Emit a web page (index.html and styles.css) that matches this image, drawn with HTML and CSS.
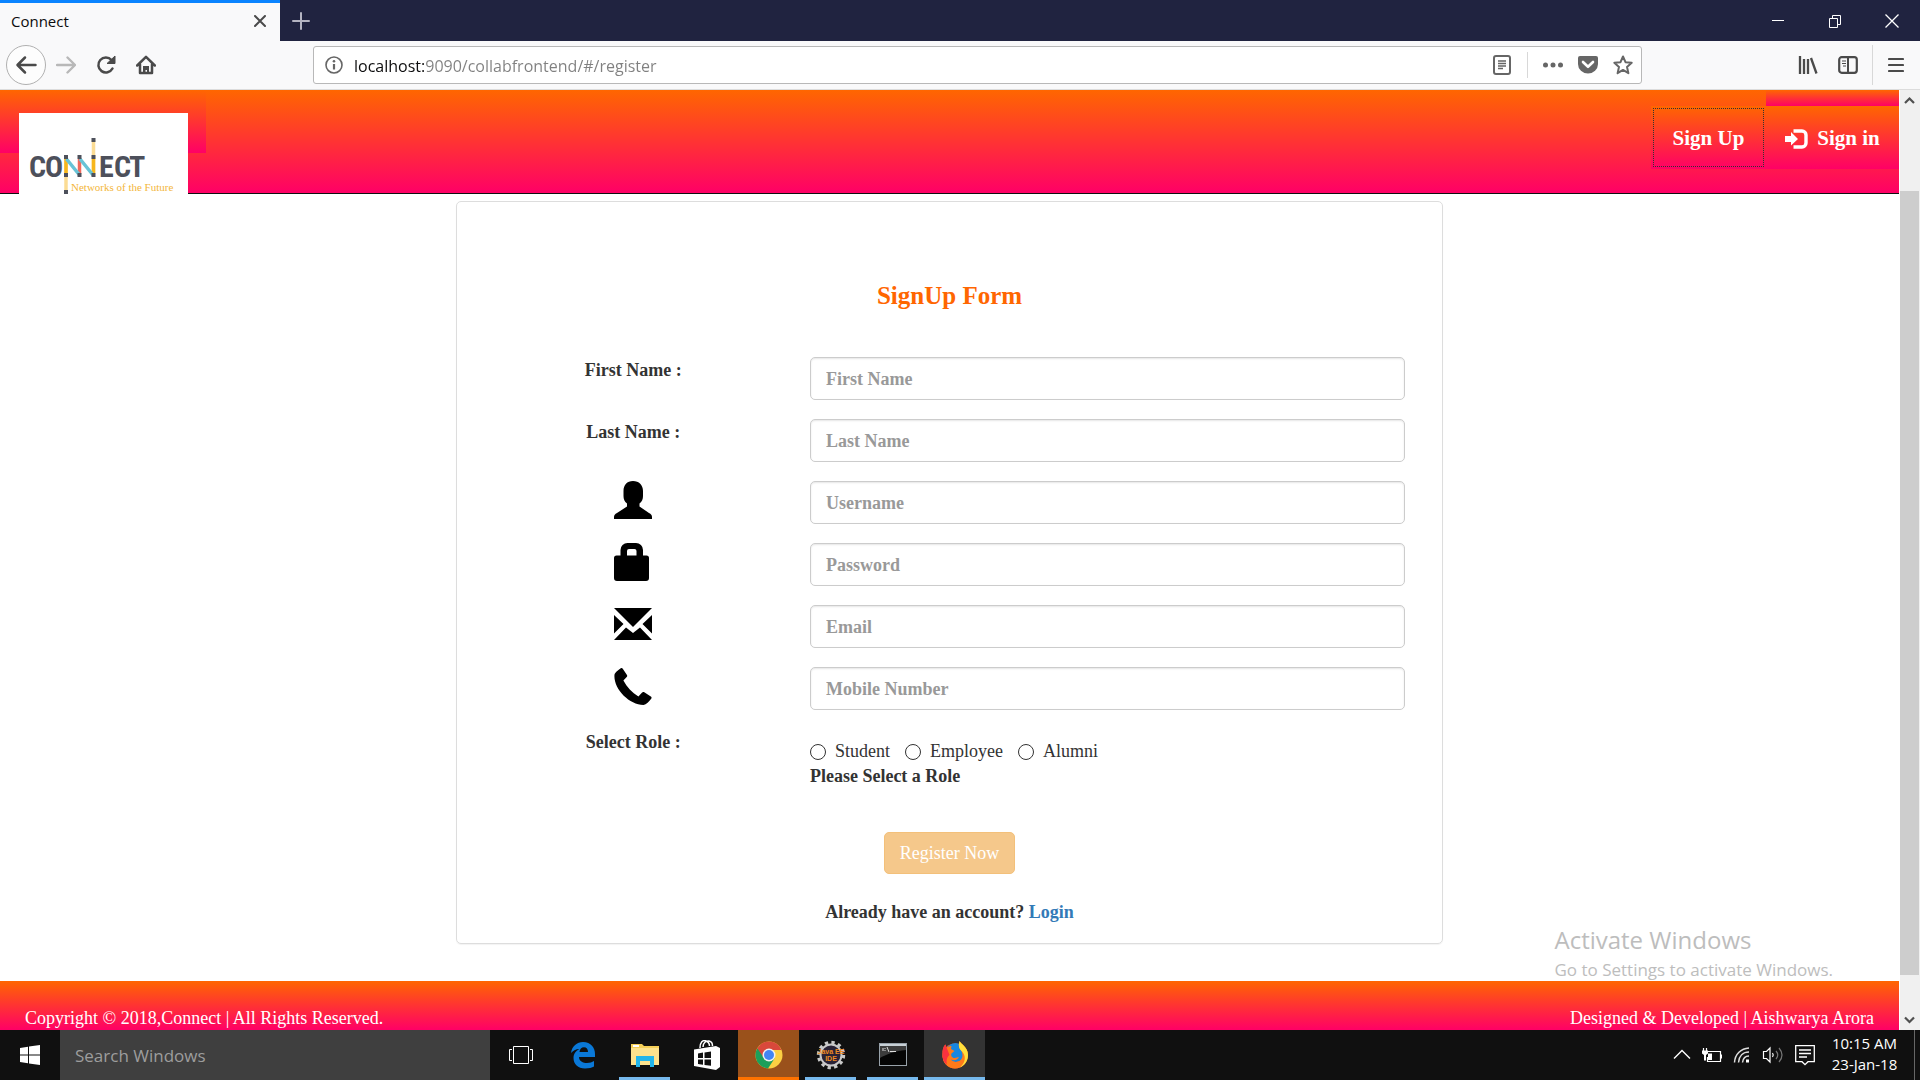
FILE: index.html
```html
<!DOCTYPE html>
<html lang="en">
<head>
<meta charset="utf-8">
<title>Connect</title>
<link rel="stylesheet" href="styles.css">
</head>
<body>
<div class="titlebar">
  <div class="tab">
    <span class="tab-title">Connect</span>
    <button class="tab-close" type="button" aria-label="Close tab"><svg width="12" height="12" viewBox="0 0 12 12"><path d="M1 1l10 10M11 1L1 11" fill="none" stroke="#4a4a4a" stroke-width="2" stroke-linecap="round"/></svg></button>
  </div>
  <button class="tab-new" type="button" aria-label="New tab"><svg width="18" height="18" viewBox="0 0 18 18"><path d="M9 1v16M1 9h16" fill="none" stroke="#b4b4c2" stroke-width="2" stroke-linecap="round"/></svg></button>
  <div class="window-controls">
    <button type="button" aria-label="Minimize"><svg width="14" height="14" viewBox="0 0 14 14"><path d="M1 6.500h12" stroke="#fff"/></svg></button>
    <button type="button" aria-label="Restore"><svg width="14" height="14" viewBox="0 0 14 14"><path d="M1.500 4.500h8v9h-8zM4.500 4.500v-3h8v9h-3" fill="none" stroke="#fff"/></svg></button>
    <button type="button" aria-label="Close"><svg width="14" height="14" viewBox="0 0 14 14"><path d="M.5.500l13 13M13.500.500l-13 13" stroke="#fff" stroke-width="1.300"/></svg></button>
  </div>
</div>

<div class="toolbar">
  <button class="tool tool-back" type="button" aria-label="Back"><svg width="40" height="40" viewBox="0 0 40 40"><circle cx="20" cy="20" r="19.500" fill="#fdfdfd" stroke="#b0b0b0"/><path d="M29.500 20H12M19 12.500L11.500 20l7.500 7.500" fill="none" stroke="#4a4a4a" stroke-width="2.500" stroke-linecap="round" stroke-linejoin="round"/></svg></button>
  <button class="tool" type="button" aria-label="Forward"><svg width="20" height="20" viewBox="0 0 20 20"><path d="M1 10h17M11.500 2.500L19 10l-7.500 7.500" fill="none" stroke="#b8b8b8" stroke-width="2.400" stroke-linecap="round" stroke-linejoin="round"/></svg></button>
  <button class="tool" type="button" aria-label="Reload"><svg width="20" height="20" viewBox="0 0 20 20"><path d="M16.500 13.500A7.500 7.500 0 1 1 15.500 5" fill="none" stroke="#4a4a4a" stroke-width="2.500" stroke-linecap="round"/><path d="M19 1v7.500h-8z" fill="#4a4a4a" stroke="#4a4a4a" stroke-linejoin="round"/></svg></button>
  <button class="tool" type="button" aria-label="Home"><svg width="20" height="20" viewBox="0 0 20 20"><path d="M1.200 10.500L10 1.800l8.800 8.700M4 9.500V18h12V9.500" fill="none" stroke="#4a4a4a" stroke-width="2.500" stroke-linecap="round" stroke-linejoin="round"/><path d="M7 19v-8h6v8h-2v-4H9.500v4z" fill="#4a4a4a"/></svg></button>
  <div class="urlbar">
    <svg class="info" width="18" height="18" viewBox="0 0 18 18"><circle cx="9" cy="9" r="8" fill="none" stroke="#666" stroke-width="1.600"/><circle cx="9" cy="5.200" r="1.300" fill="#666"/><path d="M9 8v5.500" stroke="#666" stroke-width="2.200"/></svg>
    <input class="url" type="text" aria-label="Address" value="localhost:9090/collabfrontend/#/register">
    <button type="button" aria-label="Reader view"><svg width="20" height="20" viewBox="0 0 20 20"><rect x="2" y="1" width="16" height="18" rx="2" fill="none" stroke="#666" stroke-width="2"/><path d="M6 6h8M6 8.500h8M6 11h8M6 13.500h5" stroke="#666" stroke-width="1.400"/></svg></button>
    <span class="url-divider"></span>
    <button type="button" aria-label="Page actions"><svg width="20" height="20" viewBox="0 0 20 20"><g fill="#666"><circle cx="2.500" cy="10" r="2.500"/><circle cx="10" cy="10" r="2.500"/><circle cx="17.500" cy="10" r="2.500"/></g></svg></button>
    <button type="button" aria-label="Save to Pocket"><svg width="20" height="20" viewBox="0 0 20 20"><path d="M2 1h16a2 2 0 0 1 2 2v6a10 9.500 0 0 1-20 0V3a2 2 0 0 1 2-2z" fill="#666"/><path d="M5 7l5 4.800L15 7" fill="none" stroke="#fff" stroke-width="2.600" stroke-linecap="round" stroke-linejoin="round"/></svg></button>
    <button type="button" aria-label="Bookmark"><svg width="20" height="20" viewBox="0 0 20 20"><path d="M10 1.500l2.500 5.700 6.200.6-4.700 4.100 1.400 6.300-5.400-3.300-5.400 3.300L6 11.900 1.300 7.800l6.200-.6z" fill="none" stroke="#666" stroke-width="2" stroke-linejoin="round"/></svg></button>
  </div>
  <button class="tool" type="button" aria-label="Library"><svg width="20" height="20" viewBox="0 0 20 20"><path d="M2 1v18M6 4v15M10 4v15M13 3l5.500 15.500" fill="none" stroke="#4a4a4a" stroke-width="2.300"/></svg></button>
  <button class="tool" type="button" aria-label="Sidebars"><svg width="20" height="20" viewBox="0 0 20 20"><rect x="1.200" y="2.200" width="17.600" height="15.600" rx="2.500" fill="none" stroke="#4a4a4a" stroke-width="2.200"/><path d="M10 2v16" stroke="#4a4a4a" stroke-width="2"/><path d="M4 6h4M4 8.500h4M5 11h3" stroke="#4a4a4a" stroke-width="1.200"/></svg></button>
  <span class="tool-divider"></span>
  <button class="tool" type="button" aria-label="Menu"><svg width="16" height="16" viewBox="0 0 16 16"><path d="M1 2h14M1 8h14M1 14h14" stroke="#4a4a4a" stroke-width="2.200" stroke-linecap="round"/></svg></button>
</div>

<div class="viewport">
  <div class="page">
    <header class="site-header">
      <a class="brand" href="#/" aria-label="Connect, Networks of the Future">
        <svg class="logo" width="169" height="81" viewBox="0 0 169 81">
          <rect width="169" height="81" fill="#fff"/>
          <g class="logo-name"><text x="10 26" y="64">CO</text><text x="80 95 110" y="64">ECT</text></g>
          <path d="M47 46v15M74.500 27v33" stroke="#fbdc94" stroke-width="3.500"/>
          <path d="M47 46v15M74.500 46v14" stroke="#f7b71d" stroke-width="3.500"/>
          <path d="M47 64v14" stroke="#fbdc94" stroke-width="3.500"/>
          <path d="M60.500 46v15" stroke="#f0695c" stroke-width="3.500"/>
          <path d="M47.500 46l13 16M61 46l13 16" stroke="#68c3d6" stroke-width="3.500"/>
          <path d="M45 42h4v4h-4zM45 60h4v4h-4zM58.500 42h4v4h-4zM58.500 60h4v4h-4zM72.500 42h4v4h-4zM72.500 60h4v4h-4zM72.500 25h4v4h-4zM45 77h4v4h-4z" fill="#4d505b"/>
          <text class="logo-tag" x="52" y="78">Networks of the Future</text>
        </svg>
      </a>
      <nav class="site-nav">
        <a class="nav-link nav-signup" href="#/register">Sign Up</a>
        <span class="nav-item">
          <a class="nav-link nav-signin" href="#/login"><svg width="23" height="20" viewBox="0 0 23 20"><path d="M0 7h6V3l7 7-7 6.500V13H0z" fill="#fff"/><path d="M8.500 2H17a4 4 0 0 1 4 4v8a4 4 0 0 1-4 4H8.500" fill="none" stroke="#fff" stroke-width="3.400"/></svg>Sign in</a>
        </span>
      </nav>
    </header>

    <main class="content">
      <form class="card">
        <h1 class="card-title">SignUp Form</h1>
        <div class="row">
          <label class="row-label" for="first">First Name :</label>
          <input class="field" id="first" type="text" placeholder="First Name">
        </div>
        <div class="row">
          <label class="row-label" for="last">Last Name :</label>
          <input class="field" id="last" type="text" placeholder="Last Name">
        </div>
        <div class="row">
          <label class="row-label row-icon" for="user" aria-label="Username"><svg width="38" height="38" viewBox="0 0 38 38"><path d="M19 0c6 0 10 4 10 10v5c0 3-1 5.500-3.500 7.500v3L35 32c2 1 3 2 3 4v2H0v-2c0-2 1-3 3-4l10-6.500v-3C10.500 20.500 9.500 18 9.500 15v-5C9.500 4 13 0 19 0z"/></svg></label>
          <input class="field" id="user" type="text" placeholder="Username">
        </div>
        <div class="row">
          <label class="row-label row-icon" for="pass" aria-label="Password"><svg width="38" height="38" viewBox="0 0 38 38"><path fill-rule="evenodd" d="M6.500 12.500V7a7 7 0 0 1 7-7H22a7 7 0 0 1 7 7v5.500h3.500A2.500 2.500 0 0 1 35 15v20a3 3 0 0 1-3 3H3a3 3 0 0 1-3-3V15a2.500 2.500 0 0 1 2.500-2.500zm6.500 0h9.500V8a2 2 0 0 0-2-2H15a2 2 0 0 0-2 2z"/></svg></label>
          <input class="field" id="pass" type="password" placeholder="Password">
        </div>
        <div class="row">
          <label class="row-label row-icon" for="email" aria-label="Email"><svg width="38" height="38" viewBox="0 0 38 38"><path d="M0 3h38L19 22zM0 10l9.500 9L0 28.500zM38 10v18.500L28.500 19zM0 35l12-12.500 7 5.500 7-5.500L38 35z"/></svg></label>
          <input class="field" id="email" type="email" placeholder="Email">
        </div>
        <div class="row">
          <label class="row-label row-icon" for="mobile" aria-label="Mobile Number"><svg width="38" height="38" viewBox="0 0 38 38"><path d="M6.500 1.500c.7-.7 1.500-.6 2.100.1l4.200 6.200c.6.900.5 1.500-.1 2.200l-3.300 3.500c3.500 6.500 8.500 12 15 16l3.700-4c.7-.7 1.400-.7 2.200-.2l6.500 4.300c.9.600 1 1.400.4 2.200-2 2.900-5 5.700-7.700 6.200C15 38-1 21.500.500 7.500 1 5.500 4.500 3 6.500 1.500z"/></svg></label>
          <input class="field" id="mobile" type="tel" placeholder="Mobile Number">
        </div>
        <div class="row" role="radiogroup" aria-labelledby="role-label">
          <span class="row-label" id="role-label">Select Role :</span>
          <div class="role">
            <div class="role-options">
              <label class="role-option"><input type="radio" name="role">Student</label>
              <label class="role-option"><input type="radio" name="role">Employee</label>
              <label class="role-option"><input type="radio" name="role">Alumni</label>
            </div>
            <div class="role-hint">Please Select a Role</div>
          </div>
        </div>
        <button class="submit" type="submit" disabled>Register Now</button>
        <p class="login-note">Already have an account? <a href="#/login">Login</a></p>
      </form>
    </main>

    <footer class="site-footer">
      <span>Copyright © 2018,Connect | All Rights Reserved.</span>
      <span>Designed &amp; Developed | Aishwarya Arora</span>
    </footer>
  </div>

  <div class="scrollbar">
    <svg width="19" height="21" viewBox="0 0 19 21"><path d="M5 13l4.500-4.500L14 13" fill="none" stroke="#505050" stroke-width="2.200"/></svg>
    <div class="track-above"></div>
    <div class="thumb"></div>
    <div class="track-below"></div>
    <svg width="19" height="21" viewBox="0 0 19 21"><path d="M5 8.500L9.500 13 14 8.500" fill="none" stroke="#505050" stroke-width="2.200"/></svg>
  </div>

  <div class="watermark">
    <div class="watermark-title">Activate Windows</div>
    <div class="watermark-text">Go to Settings to activate Windows.</div>
  </div>
</div>

<div class="taskbar">
  <button class="start" type="button" aria-label="Start"><svg width="20" height="20" viewBox="0 0 20 20"><path d="M0 3l8-1.200V9.500H0zM9 1.600L20 0v9.500H9zM0 10.500h8v7.700L0 17zM9 10.500h11V20L9 18.400z" fill="#fff"/></svg></button>
  <input class="search" type="search" placeholder="Search Windows" aria-label="Search Windows">
  <div class="apps">
    <button class="app" type="button" aria-label="Task view"><svg width="24" height="20" viewBox="0 0 24 20"><path d="M4.500 1.500h15v17h-15zM3 4.500H.500v11H3M21 4.500h2.500v11H21" fill="none" stroke="#fff"/></svg></button>
    <button class="app" type="button" aria-label="Edge"><svg width="26" height="28" viewBox="0 0 26 28"><path d="M1 12C2 5 7 1 13 1c8 0 12 6 12 12v3H9c0 4 4 6 8 6 3 0 5-.8 7-2v5.500c-2 1.300-5 2-9 2C8 27.500 3.500 23 3.500 17c0-4 2.500-7.500 6-9C5.500 8 3 10 1 12zm8.500-1H18c0-3-1.500-4.700-4-4.700-2.600 0-4.200 1.700-4.500 4.700z" fill="#0a78d7"/></svg></button>
    <button class="app app-open" type="button" aria-label="File Explorer"><svg width="28" height="24" viewBox="0 0 28 24"><path d="M0 1h11l2 2h15v19H0z" fill="#f5cf58"/><path d="M0 5h28v17H0z" fill="#fde28d"/><path d="M2 2h6v2H2z" fill="#fff"/><path d="M5 24V13h18v11h-4v-6h-10v6z" fill="#22b5ea"/></svg></button>
    <button class="app" type="button" aria-label="Store"><svg width="26" height="30" viewBox="0 0 26 30"><path d="M6 8C6 2 9 0 11.500.800c3 1 4 3 4 5.200M9 7c0-4 3-6.500 6-6 2.500.5 3.500 2.500 3.500 5" fill="none" stroke="#fff" stroke-width="1.500"/><path fill-rule="evenodd" d="M0 9.500L22 6v24L0 26zm4 4V18h5v-5.400zm6.500-1V18H17v-6.600zM4 19.500V24l5 .7v-5.200zm6.500 0v5.400l6.500.9v-6.300z" fill="#fff"/><path d="M22 6l4 2v19l-4 3z" fill="#fff"/></svg></button>
    <button class="app app-alert" type="button" aria-label="Chrome"><svg width="28" height="28" viewBox="0 0 28 28"><circle cx="14" cy="14" r="13.500" fill="#fbd043"/><path d="M14 14L2.300 7.200A13.500 13.500 0 0 0 13 27.500l6.500-10z" fill="#1c9f5a"/><path d="M2.300 7.200A13.500 13.500 0 0 1 26.500 9H14l-5.500 7.500z" fill="#d9483b"/><circle cx="14" cy="14" r="6.500" fill="#f1f1f1"/><circle cx="14" cy="14" r="5" fill="#4285f4"/></svg></button>
    <button class="app app-open" type="button" aria-label="Java EE IDE"><svg width="30" height="30" viewBox="0 0 30 30"><circle cx="15" cy="15" r="12.600" fill="none" stroke="#c9c9c9" stroke-width="3.200" stroke-dasharray="3.300 3.300"/><circle cx="15" cy="15" r="10.500" fill="#292236" stroke="#c9c9c9" stroke-width="2"/><text class="app-caption" x="15" y="14">Java EE</text><text class="app-caption" x="15" y="21">IDE</text></svg></button>
    <button class="app app-open" type="button" aria-label="Command Prompt"><svg width="28" height="24" viewBox="0 0 28 24"><rect x=".5" y=".5" width="27" height="22" fill="#050505" stroke="#98a2aa"/><path d="M1 1h26v2H1z" fill="#c8d0d6"/><path d="M1 3h26v4C15 8 6 12 1 15z" fill="#3c3c3c"/><path d="M4 5v3M6 5v1M6 7v1M8 4l2 5M11 8.500h6" stroke="#ddd" fill="none"/></svg></button>
    <button class="app app-active" type="button" aria-label="Firefox"><svg width="28" height="28" viewBox="0 0 28 28"><circle cx="14" cy="15" r="12.500" fill="#ff5a2a"/><circle cx="14.500" cy="11.500" r="9.500" fill="#1787e0"/><path d="M1.500 12C1.500 8 3 4.500 4.500 3.500l1 3.500C7 5.500 9 5 10.500 5L10 8l3.500 2-3 2.500c-1 2 .5 4.500 3 4.500 2 0 3-1 4.500-1-1 3-4.500 4-8 2.500C12 22 19 22 21 17c1.200-3 0-7-2-9-1.500-2-1.700-5-.5-8 1 3 8.500 5.500 8.500 14 0 8-6 13.500-13 13.500S1 22 1.500 12z" fill="#ff7a1a"/><path d="M18.500 0c1 3 8.500 5.500 8.500 14 0 6-3.500 10.500-8 12.500 4-4 6-8 4-13-1-3-4.500-4.500-5-7.500-.3-2 0-4 .5-6z" fill="#ffdf3c"/><path d="M1.500 12c-.5 5 1 9 4.500 12-1-5 0-8 2.500-10L4.500 3.500C3 4.500 1.500 8 1.500 12z" fill="#f9323f"/></svg></button>
  </div>
  <div class="tray">
    <svg width="18" height="20" viewBox="0 0 18 20"><path d="M1 13.500L9 5.500l8 8" fill="none" stroke="#fff" stroke-width="1.400"/></svg>
    <svg width="20" height="20" viewBox="0 0 20 20"><path d="M6 6.500h12.500v10h-13V12M19.500 9.500v4M1.500 3v3M4.500 3v3" fill="none" stroke="#fff" stroke-width="1.200"/><path d="M0 5.500h6v3L4 10v5.500H2V10L0 8.500zM6 8.500h4V15H6z" fill="#fff"/></svg>
    <svg width="18" height="20" viewBox="0 0 18 20"><path d="M1.500 17.500C2 9 8 3.500 16 3M5.500 17.500C6 11 10 7 16 7M9.500 17.500c.5-4 3-6.500 6.500-6.500" fill="none" stroke="#ddd" stroke-width="1.500"/><path d="M13 14.500h3v3h-3z" fill="#fff"/></svg>
    <svg width="22" height="20" viewBox="0 0 22 20"><path d="M1.500 6.500h3L8 3v14l-3.500-3.500h-3zM10.500 8q1.500 2 0 4" fill="none" stroke="#fff" stroke-width="1.200"/><path d="M14 6q3.500 4 0 8M17 3q6 7 0 14" fill="none" stroke="#777" stroke-width="1.200"/></svg>
    <svg width="20" height="22" viewBox="0 0 20 22"><path d="M.7 1.700h18.600v16H13l-3 3-3-3H.7zM4 6h12M4 9.500h12M4 13h8" fill="none" stroke="#fff" stroke-width="1.300"/></svg>
  </div>
  <div class="clock"><span>10:15 AM</span><span>23-Jan-18</span></div>
  <button class="show-desktop" type="button" aria-label="Show desktop"></button>
</div>
</body>
</html>
```
FILE: styles.css
```css
:root {
  --ui: "Open Sans", "Noto Sans", sans-serif;
  --serif: "Liberation Serif", "Times New Roman", serif;
  --flame: linear-gradient(#ff6600, #ff0066);
}

* { box-sizing: border-box; }

body {
  margin: 0;
  min-height: 100vh;
  display: flex;
  flex-direction: column;
  background: #fff;
  font-family: var(--ui);
}

button {
  margin: 0;
  padding: 0;
  border: 0;
  background: none;
  font: inherit;
}

svg { display: block; flex: none; }

/* Browser window */
.titlebar {
  display: flex;
  height: 41px;
  background: #202340;
}

.tab {
  width: 280px;
  display: flex;
  align-items: center;
  justify-content: space-between;
  padding: 0 14px 2px 11px;
  border-top: 3px solid #0a84ff;
  background: #f9f9fa;
  font-size: 15px;
  color: #0c0c0d;
}

.tab-new { width: 42px; display: grid; place-items: center; }

.window-controls { display: flex; margin-left: auto; }
.window-controls button { width: 57px; display: grid; place-items: center; }

.toolbar {
  display: flex;
  align-items: center;
  height: 49px;
  padding: 0 4px 0 6px;
  border-bottom: 1px solid #dcdcdc;
  background: #f9f9fa;
}

.tool { width: 40px; height: 40px; display: grid; place-items: center; }

.tool-divider {
  width: 1px;
  height: 40px;
  margin: 0 3px 0 4px;
  background: #d8d8d8;
}

.urlbar {
  flex: 1;
  display: flex;
  align-items: center;
  gap: 15px;
  height: 38px;
  margin: 0 146px 0 147px;
  padding: 0 8px 0 11px;
  border: 1px solid #b8b8b8;
  border-radius: 3px;
  background: #fff;
}

.url {
  flex: 1;
  min-width: 0;
  margin-left: -4px;
  padding: 2px 0 0;
  border: 0;
  outline: 0;
  font: 16px/24px var(--ui);
  color: transparent;
  background: linear-gradient(to right, #0c0c0d 70px, #808080 70px);
  -webkit-background-clip: text;
  background-clip: text;
}

.url-divider { width: 1px; height: 26px; background: #d8d8d8; }

.viewport { flex: 1; display: flex; position: relative; }

.page {
  flex: 1;
  display: flex;
  flex-direction: column;
  font-family: var(--serif);
  font-size: 18px;
  line-height: 25px;
  color: #333;
}

/* Site header */
.site-header {
  display: flex;
  align-items: flex-start;
  justify-content: space-between;
  min-height: 104px;
  border-bottom: 1px solid #101010;
  background: var(--flame);
}

.brand {
  width: 206px;
  height: 63px;
  padding: 23px 0 0 19px;
  background: var(--flame);
}

.logo-name {
  font: bold 30px "Roboto Condensed", "Liberation Sans Narrow", sans-serif;
  fill: #4d505b;
}

.logo-tag { font: 11px var(--serif); fill: #f3b63a; }

.site-nav { display: flex; }

.nav-link {
  display: flex;
  align-items: center;
  justify-content: center;
  gap: 9px;
  height: 63px;
  padding-top: 2px;
  background: var(--flame);
  font-size: 21px;
  font-weight: bold;
  color: #fff;
  text-decoration: none;
}

.nav-signup {
  width: 115px;
  margin-top: 16px;
  outline: 1px dotted #333;
  outline-offset: -3px;
}

.nav-item {
  width: 133px;
  padding-top: 16px;
  background: var(--flame) top / 100% 16px no-repeat;
}

/* Sign-up card */
.content { flex: 1; padding: 7px 0 37px; }

.card {
  width: 52%;
  margin: 0 auto;
  display: flex;
  flex-direction: column;
  gap: 19px;
  padding: 79px 37px 18px 0;
  border: 1px solid #ddd;
  border-radius: 5px;
  box-shadow: 0 1px 1px rgba(0, 0, 0, .05);
}

.card-title {
  margin: 0 0 28px 37px;
  font-size: 25px;
  line-height: 29px;
  text-align: center;
  color: #ff6600;
}

.row {
  display: grid;
  grid-template-columns: 35fr 59fr;
}

.row-label {
  display: flex;
  justify-content: center;
  align-items: flex-start;
  padding-top: 1px;
  font-weight: bold;
}

.row-icon { padding-top: 0; }
.row-icon svg { fill: #000; }

.field {
  width: 100%;
  height: 43px;
  padding: 1px 15px 0;
  border: 1px solid #ccc;
  border-radius: 5px;
  background: #fff;
  box-shadow: inset 0 1px 2px rgba(0, 0, 0, .1);
  font: bold 18px var(--serif);
  color: #555;
}

.field::placeholder { color: #999; opacity: 1; }

.role { padding-top: 10px; }

.role-options { display: flex; gap: 15px; }

.role-option { display: flex; align-items: center; gap: 9px; }

.role-option input {
  appearance: none;
  width: 16px;
  height: 16px;
  margin: 0;
  border: 1px solid #333;
  border-radius: 50%;
  background: #fff;
}

.role-hint { font-weight: bold; }

.submit {
  align-self: center;
  height: 42px;
  margin: 24px 0 7px 37px;
  padding: 0 15px;
  border: 1px solid #f3c07a;
  border-radius: 5px;
  background: #f5c88b;
  color: #fff;
}

.login-note {
  margin: 0 0 0 37px;
  text-align: center;
  font-weight: bold;
}

.login-note a { color: #337ab7; text-decoration: none; }

.site-footer {
  display: flex;
  justify-content: space-between;
  padding: 26px 25px 0;
  background: var(--flame);
  color: #fff;
  line-height: 23px;
}

/* Scrollbar */
.scrollbar {
  width: 21px;
  display: flex;
  flex-direction: column;
  border-left: 1px solid #fff;
  background: #f0f0f0;
}

.track-above { flex: 80; }
.thumb { flex: 784; margin-right: 1px; background: #cdcdcd; }
.track-below { flex: 34; }

.watermark {
  position: absolute;
  right: 87px;
  bottom: 47px;
  color: #bdbdbd;
}

.watermark-title { font-size: 24px; line-height: 32px; }
.watermark-text { font-size: 17px; line-height: 27px; }

/* Taskbar */
.taskbar {
  display: flex;
  height: 50px;
  background: #101010;
  color: #fff;
}

.start { width: 60px; display: grid; place-items: center; }

.search {
  width: 430px;
  padding: 0 15px;
  border: 0;
  background: #3f3f3f;
  font: 17px var(--ui);
  color: #fff;
}

.search::placeholder { color: #9d9d9d; opacity: 1; }

.apps { display: flex; gap: 1px; }

.app {
  width: 61px;
  display: grid;
  place-items: center;
}

.app-open { background: linear-gradient(#76b9ed, #76b9ed) bottom / 51px 3px no-repeat; }
.app-active { background: linear-gradient(#76b9ed, #76b9ed) bottom / 100% 3px no-repeat #333; }
.app-alert { background: linear-gradient(#ff7200, #ff7200) bottom / 100% 3px no-repeat #9a511b; }

.app-caption {
  font: bold 7px "Liberation Sans", sans-serif;
  fill: #f08a24;
  text-anchor: middle;
}

.tray {
  display: flex;
  align-items: center;
  gap: 11px;
  margin-left: auto;
}

.clock {
  width: 99px;
  display: flex;
  flex-direction: column;
  justify-content: center;
  align-items: center;
  padding-bottom: 2px;
  font-size: 15px;
  line-height: 21px;
}

.show-desktop { width: 6px; border-left: 1px solid #666; }
```
